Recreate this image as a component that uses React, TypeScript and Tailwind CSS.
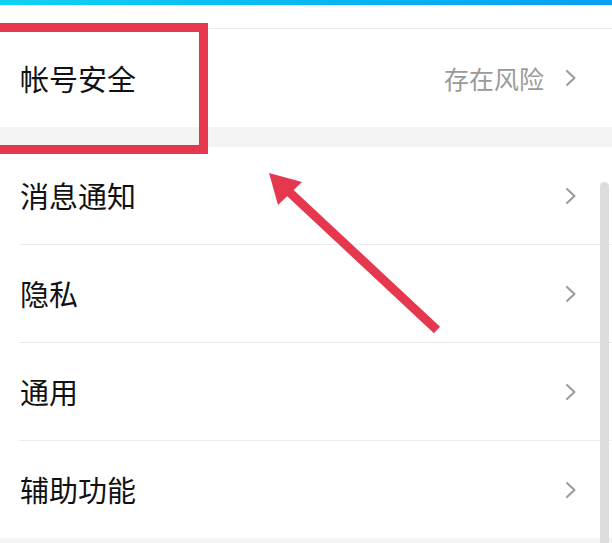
import React from 'react'

const ChevronRight = () => (
  <svg width="12" height="18" viewBox="0 0 12 18" fill="none" className="shrink-0">
    <path d="M2 2 L9.5 9 L2 16" stroke="#9a9a9a" strokeWidth="2" strokeLinecap="round" strokeLinejoin="round" />
  </svg>
)

const rows = ['消息通知', '隐私', '通用', '辅助功能']

const Row = ({ label, extra }: { label: string; extra?: string }) => (
  <div className="flex items-center justify-between pl-[20px] pr-[35px] h-full">
    <span className="text-[29px] text-[#111] leading-none">{label}</span>
    <div className="flex items-center gap-[21px]">
      {extra && <span className="text-[25px] text-[#9a9a9a] leading-none">{extra}</span>}
      <ChevronRight />
    </div>
  </div>
)

export default function App() {
  return (
    <div
      className="relative w-[612px] h-[543px] overflow-hidden bg-white"
      style={{ fontFamily: '"Noto Sans CJK SC", "Noto Sans", sans-serif' }}
    >
      <div className="h-[5px] bg-gradient-to-r from-[#12d2f2] to-[#069ff2]" />
      <div className="h-[23px] bg-white" />
      <div className="h-[99px] border-t border-[#ececf0]">
        <Row label="帐号安全" extra="存在风险" />
      </div>
      <div className="h-[20px] bg-[#f4f4f4]" />
      <div className="flex flex-col">
        {rows.map((r, i) => (
          <div key={r}>
            <div className="h-[97px]">
              <Row label={r} />
            </div>
            {i < rows.length - 1 && <div className="h-px bg-[#ececf0] ml-[19px]" />}
          </div>
        ))}
      </div>
      <div className="h-[10px] bg-[#f4f4f4]" />

      {/* scrollbar */}
      <div className="absolute left-[600px] top-[182px] w-[9px] h-[380px] rounded-full bg-[#dcdcdc]" />

      {/* annotation box */}
      <div className="absolute left-[-20px] top-[23px] w-[228px] h-[131px] border-[9px] border-[#e5384f]" />

      {/* annotation arrow */}
      <svg className="absolute left-0 top-0 pointer-events-none" width="612" height="543">
        <line x1="437" y1="330" x2="286" y2="189" stroke="#e5384f" strokeWidth="9" />
        <polygon points="269,173 302,182 278,205" fill="#e5384f" />
      </svg>
    </div>
  )
}
